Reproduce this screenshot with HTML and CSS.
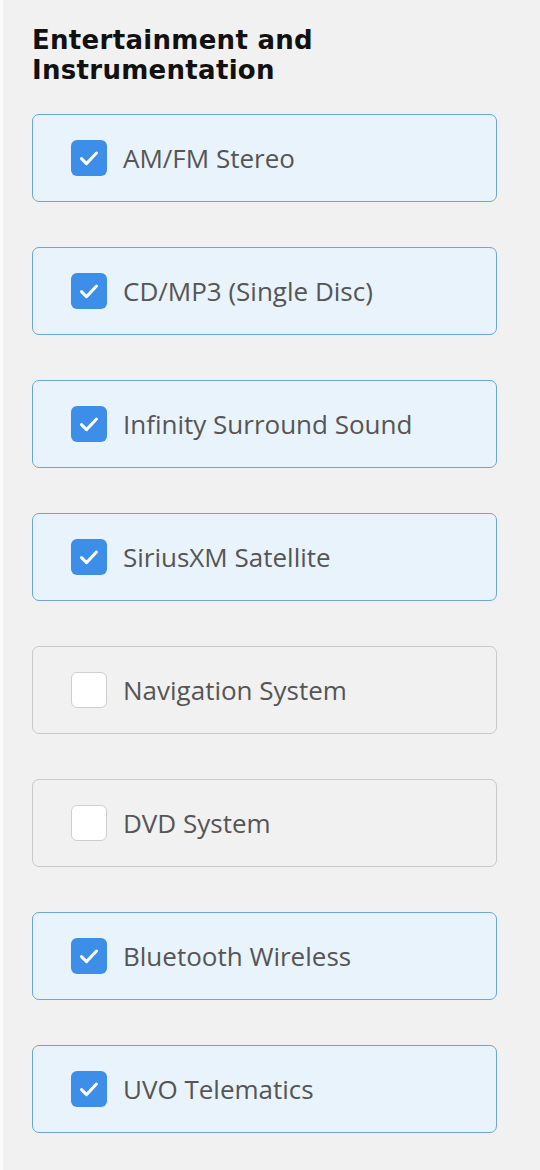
FILE: index.html
```html
<!DOCTYPE html>
<html lang="en">
<head>
  <meta charset="UTF-8" />
  <title>Entertainment and Instrumentation</title>
  <link rel="stylesheet" href="styles.css">
</head>
<body>

  <div class="panel">
    <h2 class="title">Entertainment and Instrumentation</h2>

    <div class="options">
      <label class="option checked">
        <span class="box"><svg viewBox="0 0 24 24"><path d="M6 12.5l4 4 8-8.5" /></svg></span>
        <span class="name">AM/FM Stereo</span>
      </label>
      <label class="option checked">
        <span class="box"><svg viewBox="0 0 24 24"><path d="M6 12.5l4 4 8-8.5" /></svg></span>
        <span class="name">CD/MP3 (Single Disc)</span>
      </label>
      <label class="option checked">
        <span class="box"><svg viewBox="0 0 24 24"><path d="M6 12.5l4 4 8-8.5" /></svg></span>
        <span class="name">Infinity Surround Sound</span>
      </label>
      <label class="option checked">
        <span class="box"><svg viewBox="0 0 24 24"><path d="M6 12.5l4 4 8-8.5" /></svg></span>
        <span class="name">SiriusXM Satellite</span>
      </label>
      <label class="option">
        <span class="box"></span>
        <span class="name">Navigation System</span>
      </label>
      <label class="option">
        <span class="box"></span>
        <span class="name">DVD System</span>
      </label>
      <label class="option checked">
        <span class="box"><svg viewBox="0 0 24 24"><path d="M6 12.5l4 4 8-8.5" /></svg></span>
        <span class="name">Bluetooth Wireless</span>
      </label>
      <label class="option checked">
        <span class="box"><svg viewBox="0 0 24 24"><path d="M6 12.5l4 4 8-8.5" /></svg></span>
        <span class="name">UVO Telematics</span>
      </label>
    </div>
  </div>

</body>
</html>
```

FILE: styles.css
```css
    body {
      margin: 0;
      background-color: #f1f1f1;
      font-family: 'Open Sans', sans-serif;
    }

    .panel {
      min-height: 1170px;
      box-sizing: border-box;
      border-left: 3px solid #fafafa;
      padding: 25px 43px 0 29px;
    }

    .title {
      font-family: 'DejaVu Sans', sans-serif;
      font-size: 26px;
      font-weight: 700;
      line-height: 30px;
      color: #111;
      margin: 0 0 29px;
      width: 320px;
      letter-spacing: 0.3px;
    }

    .options {
      display: flex;
      flex-direction: column;
      gap: 45px;
    }

    .option {
      display: flex;
      align-items: center;
      gap: 16px;
      height: 88px;
      box-sizing: border-box;
      padding: 0 0 0 38px;
      border: 1.5px solid #c9c9c9;
      border-radius: 7px;
      background-color: #f1f1f1;
    }

    .option.checked {
      border-color: #6ba6d6;
      background-color: #e9f3fc;
    }

    .box {
      width: 36px;
      height: 36px;
      box-sizing: border-box;
      border: 1.5px solid #cfcfcf;
      border-radius: 6px;
      background-color: #fff;
      display: flex;
      align-items: center;
      justify-content: center;
      flex-shrink: 0;
    }

    .checked .box {
      border: none;
      background-color: #3c8ee8;
    }

    .box svg {
      width: 30px;
      height: 30px;
      fill: none;
      stroke: #fff;
      stroke-width: 2.4;
      stroke-linecap: round;
      stroke-linejoin: round;
    }

    .name {
      font-size: 26px;
      color: #555;
    }
```
